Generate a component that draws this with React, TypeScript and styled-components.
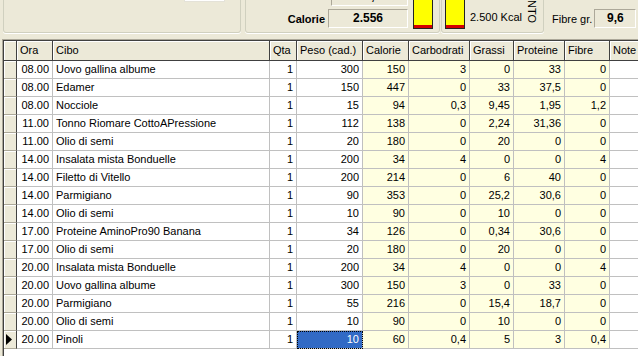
import React from "react"
import styled, { createGlobalStyle } from "styled-components"

const GlobalStyle = createGlobalStyle`
  html, body {
    margin: 0;
    padding: 0;
    background: #ECE9D8;
  }
  body {
    font-family: "Liberation Sans", Arial, sans-serif;
    font-size: 11px;
    color: #000;
  }
`

const COLS = "13px 36px 217px 27px 66px 46px 61px 44px 51px 45px 60px"

const StyledWindow = styled.div`
  display: flex;
  flex-direction: column;
  height: 100vh;
  overflow: hidden;
`

const StyledTopPanel = styled.div`
  flex: none;
  height: 39px;
  box-sizing: border-box;
  display: flex;
  align-items: flex-end;
  padding: 0 0 6px 3px;
  overflow: hidden;
`

const StyledGroupBox = styled.div<{ $w: number; $gap?: number; $justify?: string }>`
  flex: none;
  box-sizing: border-box;
  width: ${props => props.$w}px;
  height: 100px;
  margin-left: ${props => props.$gap ?? 0}px;
  border: 1px solid #D0D0BF;
  border-radius: 3px;
  box-shadow: 0 1px 0 #fff;
  display: flex;
  align-items: flex-end;
  justify-content: ${props => props.$justify ?? "flex-start"};
`

const StyledWhiteBox = styled.div`
  width: 41px;
  height: 20px;
  box-sizing: border-box;
  background: #fff;
  border: 1px solid #E4E2D8;
  margin: 0 15px 30px 0;
`

const StyledFields = styled.div`
  display: flex;
  flex-direction: column;
  gap: 3px;
  margin: 0 5px 4px 0;
`

const StyledFieldRow = styled.div`
  display: flex;
  align-items: center;
  justify-content: flex-end;
  gap: 3px;
`

const StyledLabel = styled.span<{ $bold?: boolean; $raise?: number }>`
  font-weight: ${props => (props.$bold ? "bold" : "normal")};
  margin-bottom: ${props => (props.$raise ?? 0) * 2}px;
  white-space: nowrap;
`

const StyledValueBox = styled.div<{ $w: number }>`
  width: ${props => props.$w}px;
  height: 19px;
  box-sizing: border-box;
  border-style: solid;
  border-width: 1px;
  border-color: #ACA899 #fff #fff #ACA899;
  background: #ECE9D8;
  font-weight: bold;
  font-size: 12px;
  line-height: 17px;
  text-align: center;
`

const StyledBar = styled.div`
  flex: none;
  width: 20px;
  height: 70px;
  box-sizing: border-box;
  border: 1px solid #222;
  background: #FFFF00;
  box-shadow: inset 0 -3px 0 #D40000;
  margin-bottom: 3px;
`

const StyledKcal = styled.span`
  margin: 0 0 8px 5px;
  white-space: nowrap;
  line-height: 13px;
`

const StyledVertical = styled.span`
  writing-mode: vertical-rl;
  line-height: 12px;
  margin: 0 0 9px 4px;
  white-space: nowrap;
`

const StyledFibre = styled.div`
  display: flex;
  align-items: center;
  gap: 2px;
  margin: 0 0 5px 8px;
`

const StyledGridFrame = styled.div`
  flex: 1;
  display: flex;
  margin-left: 2px;
  border-style: solid;
  border-color: #ACA899;
  border-width: 1px 0 0 1px;
`

const StyledGrid = styled.div`
  flex: 1;
  background: #fff;
  border-style: solid;
  border-color: #404040;
  border-width: 1px 0 0 1px;
  overflow: hidden;
`

const StyledRow = styled.div`
  display: grid;
  grid-template-columns: ${COLS};
`

const StyledHeadCell = styled.div`
  height: 20px;
  box-sizing: border-box;
  padding: 0 3px;
  line-height: 18px;
  background: #ECE9D8;
  border-right: 1px solid #404040;
  border-bottom: 1px solid #404040;
  box-shadow: inset 1px 1px 0 #fff;
  white-space: nowrap;
  overflow: hidden;
`

const StyledIndicator = styled.div`
  height: 18px;
  box-sizing: border-box;
  background: #ECE9D8;
  border-right: 1px solid #404040;
  border-bottom: 1px solid #ACA899;
  box-shadow: inset 1px 1px 0 #fff;
  display: flex;
  align-items: center;
  padding-left: 2px;
`

const StyledCell = styled.div<{ $right?: boolean; $tint?: boolean; $selected?: boolean }>`
  height: 18px;
  box-sizing: border-box;
  padding: 0 3px 0 3px;
  line-height: 17px;
  text-align: ${props => (props.$right ? "right" : "left")};
  background: ${props => (props.$selected ? "#316AC5" : props.$tint ? "#FFFFE1" : "#fff")};
  color: ${props => (props.$selected ? "#fff" : "#000")};
  outline: ${props => (props.$selected ? "1px dotted #000" : "none")};
  outline-offset: -1px;
  border-right: 1px solid #C0C0C0;
  border-bottom: 1px solid #C0C0C0;
  white-space: nowrap;
  overflow: hidden;
`

const headers = ["Ora", "Cibo", "Qta", "Peso (cad.)", "Calorie", "Carbodrati", "Grassi", "Proteine", "Fibre", "Note"]

type Meal = [string, string, string, string, string, string, string, string, string]

const meals: Meal[] = [
    ["08.00", "Uovo gallina albume", "1", "300", "150", "3", "0", "33", "0"],
    ["08.00", "Edamer", "1", "150", "447", "0", "33", "37,5", "0"],
    ["08.00", "Nocciole", "1", "15", "94", "0,3", "9,45", "1,95", "1,2"],
    ["11.00", "Tonno Riomare CottoAPressione", "1", "112", "138", "0", "2,24", "31,36", "0"],
    ["11.00", "Olio di semi", "1", "20", "180", "0", "20", "0", "0"],
    ["14.00", "Insalata mista Bonduelle", "1", "200", "34", "4", "0", "0", "4"],
    ["14.00", "Filetto di Vitello", "1", "200", "214", "0", "6", "40", "0"],
    ["14.00", "Parmigiano", "1", "90", "353", "0", "25,2", "30,6", "0"],
    ["14.00", "Olio di semi", "1", "10", "90", "0", "10", "0", "0"],
    ["17.00", "Proteine AminoPro90 Banana", "1", "34", "126", "0", "0,34", "30,6", "0"],
    ["17.00", "Olio di semi", "1", "20", "180", "0", "20", "0", "0"],
    ["20.00", "Insalata mista Bonduelle", "1", "200", "34", "4", "0", "0", "4"],
    ["20.00", "Uovo gallina albume", "1", "300", "150", "3", "0", "33", "0"],
    ["20.00", "Parmigiano", "1", "55", "216", "0", "15,4", "18,7", "0"],
    ["20.00", "Olio di semi", "1", "10", "90", "0", "10", "0", "0"],
    ["20.00", "Pinoli", "1", "10", "60", "0,4", "5", "3", "0,4"],
]

function Pointer() {
    return (
        <svg width="7" height="11" viewBox="0 0 7 11">
            <polygon points="0,0 6,5.5 0,11" fill="#000" />
        </svg>
    )
}

function App() {
    const current = meals.length - 1
    return (
        <StyledWindow>
            <GlobalStyle />
            <StyledTopPanel>
                <StyledGroupBox $w={238} $justify="flex-end">
                    <StyledWhiteBox />
                </StyledGroupBox>

                <StyledGroupBox $w={195} $gap={4} $justify="flex-end" style={{ paddingRight: 6 }}>
                    <StyledFields>
                        <StyledFieldRow>
                            <StyledLabel $bold $raise={3}>Peso kg</StyledLabel>
                            <StyledValueBox $w={77}>74,7</StyledValueBox>
                        </StyledFieldRow>
                        <StyledFieldRow>
                            <StyledLabel $bold>Calorie</StyledLabel>
                            <StyledValueBox $w={80}>2.556</StyledValueBox>
                        </StyledFieldRow>
                    </StyledFields>
                    <StyledBar />
                </StyledGroupBox>

                <StyledGroupBox $w={103} $gap={1} style={{ paddingLeft: 3 }}>
                    <StyledBar />
                    <StyledKcal>2.500 Kcal</StyledKcal>
                    <StyledVertical>MANTENIMENTO</StyledVertical>
                </StyledGroupBox>

                <StyledFibre>
                    <StyledLabel>Fibre gr.</StyledLabel>
                    <StyledValueBox $w={42}>9,6</StyledValueBox>
                </StyledFibre>
            </StyledTopPanel>

            <StyledGridFrame>
                <StyledGrid>
                    <StyledRow>
                        <StyledHeadCell />
                        {headers.map(h => (
                            <StyledHeadCell key={h}>{h}</StyledHeadCell>
                        ))}
                    </StyledRow>
                    {meals.map((m, i) => (
                        <StyledRow key={i}>
                            <StyledIndicator>{i === current && <Pointer />}</StyledIndicator>
                            <StyledCell $right>{m[0]}</StyledCell>
                            <StyledCell>{m[1]}</StyledCell>
                            <StyledCell $right>{m[2]}</StyledCell>
                            <StyledCell $right $selected={i === current}>{m[3]}</StyledCell>
                            <StyledCell $right $tint>{m[4]}</StyledCell>
                            <StyledCell $right $tint>{m[5]}</StyledCell>
                            <StyledCell $right $tint>{m[6]}</StyledCell>
                            <StyledCell $right $tint>{m[7]}</StyledCell>
                            <StyledCell $right $tint>{m[8]}</StyledCell>
                            <StyledCell />
                        </StyledRow>
                    ))}
                </StyledGrid>
            </StyledGridFrame>
        </StyledWindow>
    )
}

export default App
